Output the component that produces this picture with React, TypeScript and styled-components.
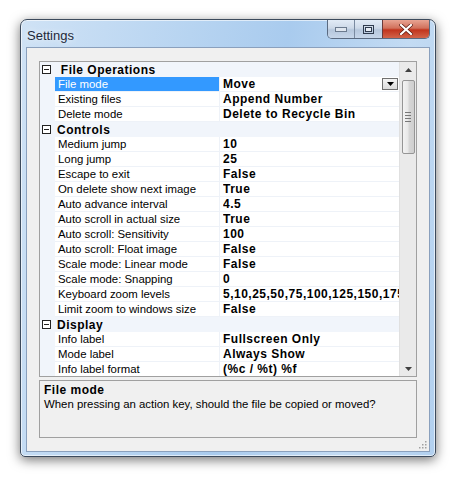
import React from 'react'
import styled, { createGlobalStyle } from 'styled-components'

const GlobalStyle = createGlobalStyle`
  html, body {
    margin: 0;
    padding: 0;
    background: #ffffff;
  }
  body {
    font-family: "Liberation Sans", Arial, sans-serif;
  }
`

const Page = styled.div`
  width: 460px;
  height: 482px;
  padding: 19px 0 0 20px;
  box-sizing: border-box;
`

const Window = styled.div`
  width: 416px;
  height: 438px;
  box-sizing: border-box;
  border: 1px solid #3c4a5c;
  border-radius: 7px 7px 5px 5px;
  background: linear-gradient(100deg, #cfe2f5 0%, #b7d4f1 35%, #a9cbee 55%, #c3dbf3 80%, #b2d0ef 100%);
  box-shadow: 0 3px 12px rgba(0, 0, 0, 0.55), inset 0 0 0 1px rgba(255, 255, 255, 0.6);
  display: flex;
  flex-direction: column;
`

const TitleBar = styled.div`
  height: 27px;
  display: flex;
  align-items: flex-start;
  justify-content: space-between;
  padding-left: 6px;
`

const Title = styled.span`
  font-family: "Liberation Sans", Arial, sans-serif;
  font-size: 13px;
  color: #1e2a3a;
  margin-top: 8px;
  text-shadow: 0 0 6px rgba(255, 255, 255, 0.9);
`

const CaptionButtons = styled.div`
  display: flex;
  margin-right: 5px;
  border: 1px solid #5a6a80;
  border-top: none;
  border-radius: 0 0 5px 5px;
  overflow: hidden;
  height: 18px;
`

const CaptionButton = styled.div<{ $w: number; $close?: boolean }>`
  width: ${p => p.$w}px;
  height: 18px;
  display: flex;
  align-items: center;
  justify-content: center;
  box-sizing: border-box;
  border-left: ${p => (p.$close ? '1px solid #6a3a3a' : '1px solid #7a8aa0')};
  background: ${p =>
    p.$close
      ? 'linear-gradient(#e8a493 0%, #d1715c 45%, #c1341d 55%, #d2644a 100%)'
      : 'linear-gradient(#e2ebf6 0%, #cdd9e8 45%, #b6c7dc 55%, #c7d6e9 100%)'};
  &:first-child {
    border-left: none;
  }
`

const Client = styled.div`
  flex: 1;
  margin: 0 5px 4px 5px;
  border: 1px solid #8aa0bd;
  background: #f0f0f0;
  padding: 13px 12px 13px 12px;
  display: flex;
  flex-direction: column;
  gap: 3px;
  position: relative;
`

const Grid = styled.div`
  height: 316px;
  box-sizing: border-box;
  border: 1px solid #a0a0a0;
  background: #ffffff;
  display: flex;
  overflow: hidden;
`

const Rows = styled.div`
  flex: 1;
  display: flex;
  flex-direction: column;
  overflow: hidden;
`

const Row = styled.div`
  height: 15px;
  display: flex;
  flex-shrink: 0;
  background: #f1f5fb;
`

const Gutter = styled.div`
  width: 15px;
  flex-shrink: 0;
  background: #f1f5fb;
`

const NameCell = styled.div<{ $selected?: boolean }>`
  width: 165px;
  flex-shrink: 0;
  box-sizing: border-box;
  padding-left: 3px;
  font-size: 11.4px;
  line-height: 14px;
  color: ${p => (p.$selected ? '#ffffff' : '#000000')};
  background: ${p => (p.$selected ? '#3399ff' : '#ffffff')};
  border-bottom: 1px solid #eef2f8;
  border-right: 1px solid #eef2f8;
  white-space: nowrap;
  overflow: hidden;
`

const ValueCell = styled.div`
  flex: 1;
  min-width: 0;
  box-sizing: border-box;
  padding-left: 3px;
  font-size: 12px;
  line-height: 14px;
  font-weight: bold;
  letter-spacing: 0.5px;
  background: #ffffff;
  border-bottom: 1px solid #eef2f8;
  white-space: nowrap;
  overflow: hidden;
  display: flex;
  align-items: flex-start;
  justify-content: space-between;
`

const ValueText = styled.span`
  overflow: hidden;
  white-space: nowrap;
`

const DropButton = styled.div`
  width: 16px;
  height: 12px;
  margin: 1px 1px 0 0;
  box-sizing: border-box;
  border: 1px solid #707070;
  background: linear-gradient(#f4f4f4, #dcdcdc);
  display: flex;
  align-items: center;
  justify-content: center;
  flex-shrink: 0;
`

const CategoryRow = styled.div`
  height: 15px;
  display: flex;
  align-items: center;
  flex-shrink: 0;
  background: #f1f5fb;
  font-size: 12px;
  font-weight: bold;
  letter-spacing: 0.5px;
  white-space: pre;
`

const Toggle = styled.div`
  width: 9px;
  height: 9px;
  margin: 0 6px 0 2px;
  box-sizing: border-box;
  border: 1px solid #222;
  background: #fff;
  position: relative;
  flex-shrink: 0;
  &::after {
    content: '';
    position: absolute;
    left: 1px;
    right: 1px;
    top: 3px;
    height: 1px;
    background: #222;
  }
`

const ScrollBar = styled.div`
  width: 16px;
  flex-shrink: 0;
  background: #eaeaea;
  border-left: 1px solid #e0e0e0;
  display: flex;
  flex-direction: column;
  align-items: center;
`

const ArrowBox = styled.div`
  height: 15px;
  width: 16px;
  display: flex;
  align-items: center;
  justify-content: center;
  flex-shrink: 0;
`

const Thumb = styled.div`
  width: 13px;
  height: 74px;
  margin-top: 3px;
  box-sizing: border-box;
  border: 1px solid #959595;
  border-radius: 2px;
  background: linear-gradient(90deg, #f3f3f3 0%, #e8e8e8 45%, #d6d6d6 55%, #cfcfcf 100%);
  display: flex;
  flex-direction: column;
  align-items: center;
  justify-content: center;
  gap: 2px;
`

const Grip = styled.div`
  width: 6px;
  height: 1px;
  background: #777;
`

const ScrollSpacer = styled.div`
  flex: 1;
`

const Description = styled.div`
  height: 58px;
  box-sizing: border-box;
  border: 1px solid #a0a0a0;
  padding: 2px 4px;
  font-size: 11.4px;
  line-height: 14px;
`

const DescTitle = styled.div`
  font-weight: bold;
  font-size: 12px;
  letter-spacing: 0.5px;
`

const SizeGrip = styled.svg`
  position: absolute;
  right: 2px;
  bottom: 2px;
`

type Item = { name: string; value: string; selected?: boolean; drop?: boolean }
type Category = { title: string; items: Item[] }

const data: Category[] = [
  {
    title: ' File Operations',
    items: [
      { name: 'File mode', value: 'Move', selected: true, drop: true },
      { name: 'Existing files', value: 'Append Number' },
      { name: 'Delete mode', value: 'Delete to Recycle Bin' },
    ],
  },
  {
    title: 'Controls',
    items: [
      { name: 'Medium jump', value: '10' },
      { name: 'Long jump', value: '25' },
      { name: 'Escape to exit', value: 'False' },
      { name: 'On delete show next image', value: 'True' },
      { name: 'Auto advance interval', value: '4.5' },
      { name: 'Auto scroll in actual size', value: 'True' },
      { name: 'Auto scroll: Sensitivity', value: '100' },
      { name: 'Auto scroll: Float image', value: 'False' },
      { name: 'Scale mode: Linear mode', value: 'False' },
      { name: 'Scale mode: Snapping', value: '0' },
      { name: 'Keyboard zoom levels', value: '5,10,25,50,75,100,125,150,175,200,300,400' },
      { name: 'Limit zoom to windows size', value: 'False' },
    ],
  },
  {
    title: 'Display',
    items: [
      { name: 'Info label', value: 'Fullscreen Only' },
      { name: 'Mode label', value: 'Always Show' },
      { name: 'Info label format', value: '(%c / %t) %f' },
    ],
  },
]

function Arrow({ up }: { up?: boolean }) {
  return (
    <svg width="7" height="4" viewBox="0 0 7 4">
      <path d={up ? 'M0 4 L3.5 0 L7 4 Z' : 'M0 0 L3.5 4 L7 0 Z'} fill="#404040" />
    </svg>
  )
}

export default function App() {
  return (
    <Page>
      <GlobalStyle />
      <Window>
        <TitleBar>
          <Title>Settings</Title>
          <CaptionButtons>
            <CaptionButton $w={26}>
              <svg width="12" height="5" viewBox="0 0 12 5">
                <rect x="0.5" y="0.5" width="11" height="4" fill="#dfe6ef" stroke="#6b7a8e" />
              </svg>
            </CaptionButton>
            <CaptionButton $w={28}>
              <svg width="11" height="9" viewBox="0 0 11 9">
                <rect x="0.5" y="0.5" width="10" height="8" fill="none" stroke="#2f3b4d" />
                <rect x="2.5" y="2.5" width="6" height="4" fill="#e8eef6" stroke="#2f3b4d" />
              </svg>
            </CaptionButton>
            <CaptionButton $w={47} $close>
              <svg width="14" height="11" viewBox="0 0 14 11">
                <path d="M2 1 L12 10 M12 1 L2 10" stroke="#5a1a10" strokeWidth="3.6" strokeLinecap="square" />
                <path d="M2 1 L12 10 M12 1 L2 10" stroke="#ffffff" strokeWidth="2.2" strokeLinecap="square" />
              </svg>
            </CaptionButton>
          </CaptionButtons>
        </TitleBar>
        <Client>
          <Grid>
            <Rows>
              {data.map(cat => (
                <React.Fragment key={cat.title}>
                  <CategoryRow>
                    <Toggle />
                    {cat.title}
                  </CategoryRow>
                  {cat.items.map(it => (
                    <Row key={it.name}>
                      <Gutter />
                      <NameCell $selected={it.selected}>{it.name}</NameCell>
                      <ValueCell>
                        <ValueText>{it.value}</ValueText>
                        {it.drop && (
                          <DropButton>
                            <svg width="7" height="4" viewBox="0 0 7 4">
                              <path d="M0 0 L3.5 4 L7 0 Z" fill="#000" />
                            </svg>
                          </DropButton>
                        )}
                      </ValueCell>
                    </Row>
                  ))}
                </React.Fragment>
              ))}
            </Rows>
            <ScrollBar>
              <ArrowBox>
                <Arrow up />
              </ArrowBox>
              <Thumb>
                <Grip />
                <Grip />
                <Grip />
                <Grip />
              </Thumb>
              <ScrollSpacer />
              <ArrowBox>
                <Arrow />
              </ArrowBox>
            </ScrollBar>
          </Grid>
          <Description>
            <DescTitle>File mode</DescTitle>
            When pressing an action key, should the file be copied or moved?
          </Description>
          <SizeGrip width="10" height="10" viewBox="0 0 10 10">
            {[
              [8, 2],
              [8, 5],
              [5, 5],
              [8, 8],
              [5, 8],
              [2, 8],
            ].map(([x, y]) => (
              <rect key={`${x}-${y}`} x={x} y={y} width="1.5" height="1.5" fill="#a0a0a0" />
            ))}
          </SizeGrip>
        </Client>
      </Window>
    </Page>
  )
}
